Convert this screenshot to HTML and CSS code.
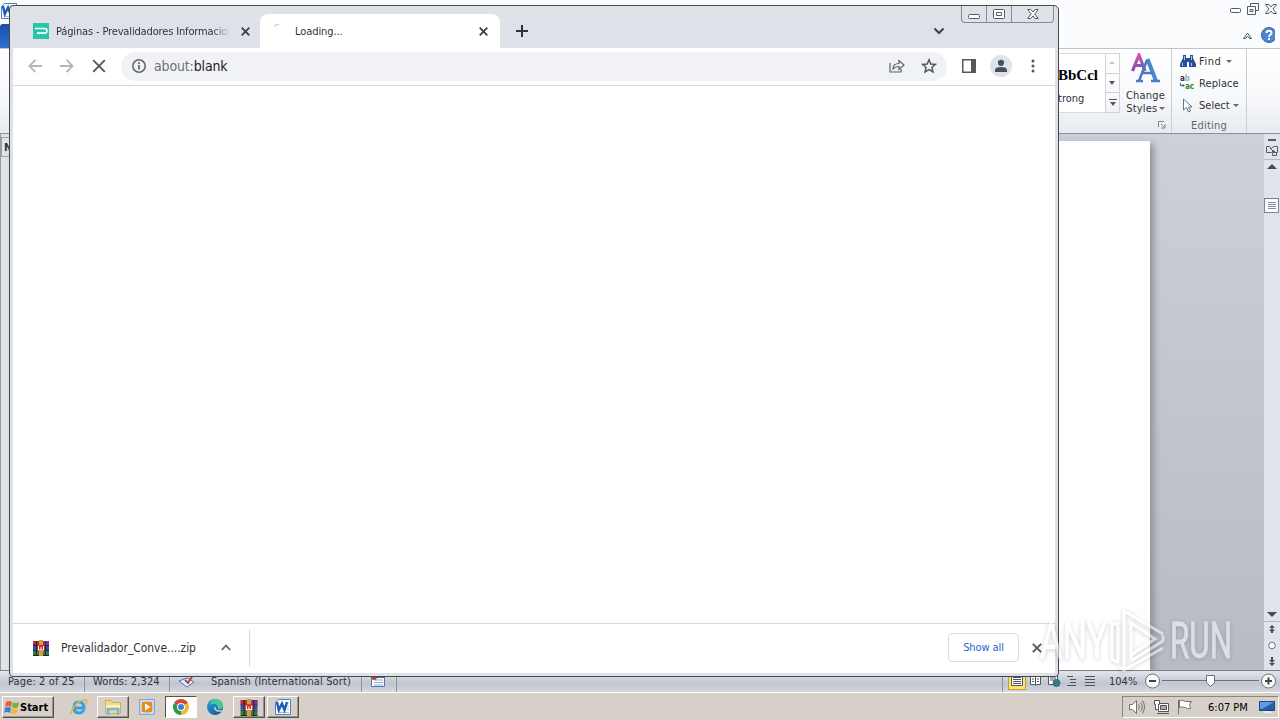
FILE: index.html
```html
<!DOCTYPE html>
<html lang="en">
  <head>
    <meta charset="utf-8">
    <title>Desktop</title>
    <link rel="stylesheet" href="styles.css">
  </head>
<body>
  <svg class="defs" width="0" height="0">
    <defs>
      <linearGradient id="pink" x2="0" y2="1"><stop stop-color="#d252b5"/><stop offset="1" stop-color="#7a4fae"/></linearGradient>
      <linearGradient id="edge" x2="1" y2="1"><stop stop-color="#2fa3dc"/><stop offset="1" stop-color="#0b4f9e"/></linearGradient>
      <symbol id="rar" viewBox="0 0 16 16">
        <path fill="#b32b3c" d="M0 1h16v4H0z"/><path fill="#7c3a94" d="M10 1h6v4h-6z"/><path fill="#3150ac" d="M0 6h16v4H0z"/><path fill="#238542" d="M0 11h16v4H0z"/>
        <path fill="#28212c" d="M0 5h16v1H0zM0 10h16v1H0zM0 15h16v1H0zM3 1h1v14H3zM12 1h1v14h-1z"/>
        <path fill="#d79c32" d="M6 0h4v16H6z"/><path fill="#c82b2b" d="M4 5h8v6H4z"/>
        <path fill="none" stroke="#fff" d="M5.500 6v4h5V6M8 7v3"/>
      </symbol>
      <symbol id="word" viewBox="0 0 18 18">
        <path fill="#fff" stroke="#4b82bd" d="M4.500 1.500h12v15h-15v-12z"/>
        <path fill="none" stroke="#9ab8df" d="M13 5h2M13 8h2M13 11h2M5 14.500h10"/>
        <path fill="none" stroke="#1d5fb5" stroke-width="2.500" d="M3 4l1.800 8L8 5.500l2.500 6.500L13 4"/>
      </symbol>
    </defs>
  </svg>

  <div class="desktop">
    <section class="word">
      <header class="word-title">
        <svg class="word-logo" width="62" height="18"><use href="#word" width="18" height="18"/><path fill="#3c62b0" d="M31 3h12v1H31zM58 3h4v1h-4z"/></svg>
        <svg class="word-buttons" width="48" height="14" fill="none" stroke="#555b66">
          <rect x=".5" y="6.500" width="10" height="4" rx="1"/>
          <path d="M20.500 4.500v-3h8v7h-3M17.500 4.500h8v8h-8zM20 7.500h3v2h-3z"/>
          <path d="M35.500 2.500h3.500l2 2.500 2-2.500h3.500L43 7l3.500 4.500H43L41 9l-2 2.500h-3.500L39 7z"/>
        </svg>
      </header>
      <div class="word-tabs">
        <span class="file-tab"></span>
        <svg width="38" height="18">
          <path fill="none" stroke="#4e5561" d="M6.500 12.500L10.500 7l4 5.500h-2l-2-2.500-2 2.500z"/>
          <circle cx="32" cy="9" r="7.500" fill="#4e86d4" stroke="#3165ad"/>
          <path fill="none" stroke="#fff" stroke-width="2" d="M29.500 7c0-3 5-3 5 0 0 2-2.500 1.500-2.500 4M32 12v2"/>
        </svg>
      </div>
      <div class="ribbon">
        <div class="styles-group">
          <div class="style-item"><b>BbCcl</b><span>trong</span></div>
          <div class="gallery-scroll">
            <span><svg width="7" height="4"><path fill="#c5c8ce" d="M3 0l3 3H0z"/></svg></span>
            <span><svg width="7" height="4"><path fill="#555" d="M0 0h6L3 4z"/></svg></span>
            <span><svg width="8" height="7"><path fill="#555" d="M0 0h8v1H0zM1 3h6L4 7z"/></svg></span>
          </div>
          <div class="change-styles">
            <svg width="31" height="30">
              <path fill="none" stroke="url(#pink)" stroke-width="3.200" d="M2.500 18L9 2l6 16M5 12.500h8"/>
              <path fill="none" stroke="#4786d2" stroke-width="4" d="M17.500 6l8.500 22"/>
              <path fill="none" stroke="#4a7cc2" stroke-width="2.500" d="M17 7L9 28M11 20h12M6 28h7M21 28h9"/>
            </svg>
            <span>Change</span>
            <span>Styles <i class="arrow"></i></span>
          </div>
          <svg class="launcher" width="8" height="8"><path fill="none" stroke="#7d838e" d="M.5 6V.5H6M3 3l3 3M7 3v4H3"/></svg>
        </div>
        <div class="editing-group">
          <div class="command">
            <svg width="16" height="14"><path fill="#284f9c" d="M3 1h3v3h4V1h3v3l3 6v3H9V8H7v5H0v-3l3-6z"/><path fill="#a9c5f0" d="M4 2h1v4H4zM11 2h1v4h-1zM2 9h1v3H2zM11 9h1v3h-1z"/></svg>
            <span class="find">Find</span><i class="arrow"></i>
          </div>
          <div class="command">
            <div class="replace-icon"><span>a<em>b</em></span><span><svg width="5" height="5"><path fill="none" stroke="#246bb4" d="M.5 0v2.500H4M2.500 1L4 2.500 2.500 4"/></svg><u>ac</u></span></div>
            <span class="replace">Replace</span>
          </div>
          <div class="command">
            <svg width="16" height="15"><path fill="#fff" stroke="#5d7594" d="M3.500 1v11l3-2.500 2 4.500 2-1-2-4h3.500z"/></svg>
            <span class="select">Select</span><i class="arrow"></i>
          </div>
          <div class="group-name">Editing</div>
        </div>
      </div>
      <div class="document">
        <div class="nav-pane"><b>N</b></div>
        <div class="page"></div>
        <div class="canvas"></div>
        <div class="scrollbar">
          <svg width="16" height="80" fill="none" stroke="#555c69">
            <path stroke-width="2" d="M4 6h8"/>
            <path d="M2.500 12.500h3l2 2 2-2h4v6h-2l-2-2-2 2h-5zM8.500 18.500h4v3h-4zM6 14l5 5"/>
            <path stroke="#b5bac4" d="M0 25.500h16"/>
            <path fill="#444b58" stroke="none" d="M8 30l5 5H3z"/>
            <rect x=".5" y="64.500" width="14" height="14" fill="#fafbfd" stroke="#7d8490"/>
            <path stroke="#868d99" d="M4 68.500h8M4 70.500h8M4 72.500h8M4 74.500h8"/>
          </svg>
          <svg width="16" height="61" fill="#444b58">
            <path d="M3 3h10L8 8z"/>
            <path stroke="#b5bac4" d="M0 12.500h16"/>
            <path d="M8 16l3 3H5zM8 19l3 3H5zM7 21h2v3H7zM8 57l3-3H5zM8 54l3-3H5zM7 48h2v3H7z"/>
            <circle cx="8" cy="36.500" r="3.300" fill="#fff" stroke="#6b727e"/>
          </svg>
        </div>
      </div>
      <footer class="status">
        <span class="status-page">Page: 2 of 25</span>
        <span class="status-words">Words: 2,324</span>
        <span class="status-proof"><svg width="18" height="14"><path fill="#e6efff" stroke="#4474bd" d="M1 7l8-3 7 4-7 5z"/><path fill="none" stroke="#c33e32" stroke-width="2" d="M7 6l3 3 5-8"/></svg></span>
        <span class="status-lang">Spanish (International Sort)</span>
        <span class="status-macro"><svg width="16" height="14"><path fill="#fff" stroke="#4f78b5" d="M1.500 2.500h13v10h-13z"/><path stroke="#8fa9d0" d="M4 6h9M4 8.500h9M4 11h9"/><path fill="#3d69b2" d="M6 2h9v2H6z"/><circle cx="4" cy="3" r="3" fill="#b94035"/></svg></span>
        <div class="views">
          <svg width="96" height="20" fill="none" stroke="#4c5563">
            <rect x="1.500" y=".5" width="17" height="18" fill="#ffe17a" stroke="#c99c2c"/>
            <path fill="#fff" d="M4.500 3.500h11v11h-11z"/><path d="M6 6.500h8M6 8.500h8M6 10.500h8M6 12.500h8"/>
            <path fill="#fff" d="M23.500 5.500h4l1 1 1-1h4v8h-4l-1 1-1-1h-4zM28.500 6v8M25 8h2M25 10.500h2M30 8h2M30 10.500h2"/>
            <path fill="#fff" d="M41.500 4.500h9v9h-9zM43 7h6M43 9h6"/><circle cx="49.500" cy="12" r="3.500" fill="#308470" stroke="#27669f"/>
            <path d="M60 5.500h6M63 8.500h6M63 11.500h6M60 14.500h9M78 5.500h10M78 8.500h10M78 11.500h10M78 14.500h10"/>
          </svg>
          <span class="zoom-level">104%</span>
          <svg width="135" height="20" fill="none" stroke="#69717e">
            <path d="M17 9.500h97"/><circle cx="7.500" cy="10" r="7" fill="#fafafa"/><circle cx="123.500" cy="10" r="7" fill="#fafafa"/>
            <path stroke="#444" stroke-width="2" d="M4 10h7M120 10h7M123.500 6.500v7"/>
            <path fill="#fff" d="M61.500 4.500h8v7l-4 4-4-4z"/>
          </svg>
        </div>
      </footer>
    </section>

    <section class="chrome">
      <div class="tab-strip">
        <div class="tab">
          <svg width="16" height="16"><path fill="#27c6a4" d="M0 0h16v16H0z"/><path fill="none" stroke="#fff" stroke-width="1.600" d="M2 5.500h9.500q2.500 0 2.500 2.300t-2.500 2.300H4"/></svg>
          <span class="tab-title tab-title-fade">Páginas - Prevalidadores Informacion</span>
          <svg class="tab-close" width="9" height="9"><path stroke="#3c4043" stroke-width="1.800" d="M.7.7l7.600 7.600M8.300.7L.7 8.300"/></svg>
        </div>
        <div class="tab tab-active">
          <svg width="16" height="16"><path fill="none" stroke="#c8cdf4" stroke-width="1.600" d="M2 3q2-1.500 5-1.500"/></svg>
          <span class="tab-title">Loading...</span>
          <svg class="tab-close" width="9" height="9"><path stroke="#3c4043" stroke-width="1.800" d="M.7.7l7.600 7.600M8.300.7L.7 8.300"/></svg>
        </div>
        <svg class="new-tab" width="12" height="12"><path stroke="#303339" stroke-width="2" d="M6 0v12M0 6h12"/></svg>
        <svg class="tab-search" width="12" height="8"><path fill="none" stroke="#3c4043" stroke-width="2" d="M1.500 1.500L6 6l4.500-4.500"/></svg>
        <div class="window-buttons">
          <span><svg width="12" height="14"><rect x=".5" y="7.500" width="11" height="4" rx="1" fill="#fff" stroke="#555b66"/></svg></span>
          <span><svg width="12" height="14" fill="#fff" stroke="#555b66"><rect x=".5" y="2.500" width="11" height="9" rx="1"/><path d="M3.500 5.500h5v3h-5z"/></svg></span>
          <span><svg width="12" height="14"><path fill="#fff" stroke="#555b66" d="M.8 2.500h3L6 5l2.200-2.500h3L7.800 7l3.400 4.500h-3L6 9l-2.200 2.500h-3L4.200 7z"/></svg></span>
        </div>
      </div>
      <div class="toolbar">
        <svg width="14" height="14" fill="none" stroke="#b4b6b9" stroke-width="1.800"><path d="M14 7H1M7.500.8L1.300 7l6.200 6.200"/></svg>
        <svg width="14" height="14" fill="none" stroke="#b4b6b9" stroke-width="1.800"><path d="M0 7h13M6.500.8L12.700 7l-6.200 6.200"/></svg>
        <svg width="14" height="14" stroke="#54585c" stroke-width="1.900"><path d="M1.200 1.200l11.600 11.600M12.800 1.200L1.200 12.800"/></svg>
        <div class="omnibox">
          <svg width="14" height="14"><circle cx="7" cy="7" r="6.200" fill="none" stroke="#5f6368" stroke-width="1.500"/><path stroke="#5f6368" stroke-width="1.700" d="M7 6v4.500M7 3.300V5"/></svg>
          <span class="url">about:<b>blank</b></span>
          <svg class="share" width="16" height="14" fill="none" stroke="#5f6368" stroke-width="1.200"><path d="M1 4v9h11v-3M4 10q0-5.500 6-5.500V1.500L15 6l-5 4.500v-3Q6 7.500 4 10z"/></svg>
          <svg width="16" height="16"><path fill="none" stroke="#54585c" stroke-width="1.500" d="M8 1.800l1.800 4.200 4.600.4-3.500 3 1.100 4.500-4-2.400-4 2.400 1.100-4.500-3.500-3 4.600-.4z"/></svg>
        </div>
        <svg class="panel" width="14" height="14"><path fill="#54585c" fill-rule="evenodd" d="M0 0h14v14H0zM1.500 1.500v11H9v-11z"/></svg>
        <svg class="profile" width="22" height="22"><circle cx="11" cy="11" r="11" fill="#dfe2e8"/><circle cx="11" cy="7.800" r="3.100" fill="#47505e"/><path fill="#47505e" d="M5 17v-2q0-3 6-3t6 3v2z"/></svg>
        <svg class="menu" width="4" height="14" fill="#505458"><circle cx="2" cy="2" r="1.500"/><circle cx="2" cy="7" r="1.500"/><circle cx="2" cy="12" r="1.500"/></svg>
      </div>
      <div class="blank-page"></div>
      <div class="downloads">
        <div class="download">
          <svg width="16" height="16"><use href="#rar"/></svg>
          <span class="file-name">Prevalidador_Conve....zip</span>
          <svg width="10" height="7"><path fill="none" stroke="#5f6368" stroke-width="1.800" d="M.8 6L5 1.500 9.200 6"/></svg>
        </div>
        <button class="show-all">Show all</button>
        <svg width="10" height="10"><path stroke="#54585c" stroke-width="1.900" d="M.8.8l8.400 8.400M9.200.8L.8 9.200"/></svg>
      </div>
    </section>

    <footer class="taskbar">
      <div class="start">
        <svg width="17" height="16"><path fill="#e3603c" d="M3 3q3-2 6 0L8 8Q5 6 2 8z"/><path fill="#70b544" d="M10 3q3 2 6 0l-1 5q-3 2-6 0z"/><path fill="#3b82cc" d="M2 9q3-2 6 0l-1 5q-3-2-6 0z"/><path fill="#f2b92f" d="M9 9q3 2 6 0l-1 5q-3 2-6 0z"/></svg>
        <b>Start</b>
      </div>
      <div class="task">
        <svg width="18" height="18"><path fill="none" stroke="#3a9fe0" stroke-width="3" d="M14 12q-2 3-5 3-5 0-5-5.500T9 4q5 0 5 6H5"/><path fill="none" stroke="#e5b536" stroke-width="1.500" d="M2 15Q-1 17 4 9t12-7q2 0 0 4"/></svg>
      </div>
      <div class="task task-open">
        <svg width="18" height="18"><path fill="#f1d98c" stroke="#cfae5c" d="M1.500 2.500h6l1 2h8v11h-15z"/><path fill="#fff2b1" d="M2 7h14v3H2z"/><path fill="none" stroke="#75b6df" stroke-width="2.500" d="M4 17v-6h10v6"/></svg>
      </div>
      <div class="task">
        <svg width="18" height="18"><path fill="#c3dcf3" stroke="#7ba9d3" d="M1.500 1.500h15v15h-15z"/><path fill="#f08a16" d="M4 4h10v10H4z"/><circle cx="9" cy="9" r="5.500" fill="#f08a16"/><path fill="#fff" d="M7 5.500L12.500 9 7 12.500z"/></svg>
      </div>
      <div class="task task-pressed">
        <svg width="18" height="18"><path fill="#df4334" d="M9 9L2.070 5A8 8 0 0 1 15.930 5z"/><path fill="#efbd27" d="M9 9l6.930-4A8 8 0 0 1 9 17z"/><path fill="#299b4d" d="M9 9v8A8 8 0 0 1 2.070 5z"/><circle cx="9" cy="9" r="4" fill="#fff"/><circle cx="9" cy="9" r="3" fill="#397de4"/></svg>
      </div>
      <div class="task">
        <svg width="18" height="18"><circle cx="9" cy="9" r="8" fill="url(#edge)"/><path fill="#48c99a" d="M9 1q8 0 8 7-1 4-5 3 0-5-4-5-2 0-4 1 1-6 5-6z"/><path fill="#d6d0c8" d="M9.500 8.500q0 5 7 3.500l-1 1.500Q9 15 8 9.500z"/></svg>
      </div>
      <div class="task task-open"><svg width="18" height="17"><use href="#rar" width="18" height="17"/></svg></div>
      <div class="task task-open task-last"><svg width="18" height="18"><use href="#word"/></svg></div>
      <div class="tray">
        <svg width="66" height="18" fill="#fff" stroke="#71716f">
          <path d="M1.500 6.500h3l4-4v13l-4-4h-3z"/><path fill="none" d="M10.500 6.500q2 2.500 0 5M12.500 4.500q3.500 4.500 0 9M14.500 2.500q4 6.500 0 13"/>
          <path stroke="#555" d="M30.500 5.500h10v8h-10zM29 15.500h12"/><path fill="#aaa" stroke="#555" d="M32.500 7.500h6v4h-6z"/><path stroke="#555" d="M26.500 2.500h5v4h-1v5h-3v-5h-1z"/>
          <path d="M50.500 2v14M51.500 2.500q3-1 6 1h6l-2 3 1 4q-3 1-5-1-3-1-6 0z"/>
        </svg>
        <span class="clock">6:07 PM</span>
        <svg width="16" height="16"><path fill="#245dad" stroke="#24467c" d="M.5 2.500h15v9H.5z"/><path fill="#5c9ce4" d="M1 3h14L3 10H1z"/><path fill="#e9edf2" d="M4 12h7l2 2H5z"/></svg>
      </div>
    </footer>

    <svg class="watermark" width="204" height="70">
      <text x="2" y="51" textLength="67" lengthAdjust="spacingAndGlyphs">ANY</text>
      <path d="M80 17h-6v35l6 4M80 14v42M125 27L86 4v58M93 52V16l24 16-24 16M125 28v6L93 54M125 41L86 63l-5-3"/>
      <text x="132" y="51" textLength="62" lengthAdjust="spacingAndGlyphs">RUN</text>
    </svg>
  </div>
</body>
</html>
```
FILE: styles.css
```css
* {
  box-sizing: border-box;
}

body {
  margin: 0;
  font-family: "DejaVu Sans Condensed", "DejaVu Sans", sans-serif;
  font-size: 11px;
  color: #303338;
}

svg {
  display: block;
  flex-shrink: 0;
}

span {
  white-space: nowrap;
}

.defs {
  position: absolute;
}

.desktop {
  position: relative;
  display: flex;
  flex-direction: column;
  width: 1280px;
  height: 720px;
  overflow: hidden;
}

/* word window */

.word {
  display: flex;
  flex-direction: column;
  height: 692px;
  background: #fbfcfd;
}

.word-title,
.word-tabs {
  display: flex;
  justify-content: space-between;
  height: 24px;
  padding-top: 2px;
}

.word-buttons {
  margin-right: 2px;
}

.word-tabs {
  padding: 0 5px 0 0;
  align-items: center;
}

.word-tabs svg {
  margin-top: -2px;
}

.file-tab {
  width: 40px;
  height: 24px;
  background: linear-gradient(#1c4da5, #2f70d4);
  border-radius: 3px 0 0 0;
}

.ribbon {
  display: flex;
  justify-content: flex-end;
  height: 86px;
  padding-right: 33px;
  border-top: 1px solid #bfc3ca;
  border-bottom: 1px solid #8b9099;
  background: linear-gradient(#fff, #f8f9fb 55%, #e7eaef);
}

.styles-group {
  position: relative;
  display: flex;
  padding-top: 4px;
  border-right: 1px solid #c9cdd4;
}

.style-item {
  display: flex;
  flex-direction: column;
  width: 48px;
  height: 60px;
  border: 1px solid #d5d8dd;
  border-right: 0;
  background: #fff;
}

.style-item b {
  height: 37px;
  margin-top: 12px;
  color: #000;
  font: bold 15px/18px "Liberation Serif", serif;
}

.style-item span {
  margin-top: -11px;
}

.gallery-scroll {
  display: flex;
  flex-direction: column;
  width: 15px;
  height: 60px;
  border: 1px solid #cfd3d9;
}

.gallery-scroll span {
  display: flex;
  flex: 1;
  align-items: center;
  justify-content: center;
  border-bottom: 1px solid #cfd3d9;
}

.gallery-scroll span:last-child {
  border: 0;
}

.change-styles {
  display: flex;
  flex-direction: column;
  align-items: center;
  width: 51px;
  line-height: 13px;
  letter-spacing: .2px;
}

.change-styles svg {
  margin-bottom: 6px;
}

.arrow {
  display: inline-block;
  border: 3px solid transparent;
  border-top-color: #666b73;
  border-bottom: 0;
  vertical-align: 2px;
}

.change-styles .arrow {
  margin-left: -2px;
}

.launcher {
  position: absolute;
  right: 5px;
  bottom: 4px;
}

.editing-group {
  width: 75px;
  padding: 1px 0 0 8px;
  border-right: 1px solid #c9cdd4;
}

.command {
  display: flex;
  align-items: center;
  height: 22px;
  gap: 3px;
}

.find {
  width: 24px;
  letter-spacing: .5px;
}

.replace {
  letter-spacing: .1px;
}

.select {
  width: 31px;
}

.replace-icon {
  display: flex;
  flex-direction: column;
  width: 16px;
  font: bold 8px/8px "DejaVu Sans Condensed", sans-serif;
}

.replace-icon span {
  display: flex;
}

.replace-icon em {
  color: #a7a9ac;
  font-style: normal;
}

.replace-icon u {
  color: #288437;
  text-decoration: none;
}

.group-name {
  padding-right: 8px;
  line-height: 20px;
  letter-spacing: .2px;
  text-align: center;
  color: #62676f;
}

.document {
  display: flex;
  flex: 1;
  background: linear-gradient(#cdd0d8, #b7bbc4);
}

.nav-pane {
  width: 10px;
  padding-top: 3px;
  overflow: hidden;
  background: #e1e4ea;
  border-left: 1px solid #969ba4;
}

.nav-pane b {
  display: block;
  height: 20px;
  padding-left: 2px;
  border: 1px solid #9ca1ab;
  line-height: 19px;
}

.page {
  width: 1140px;
  margin-top: 7px;
  background: #fff;
  box-shadow: 4px 3px 7px #8f939c;
}

.canvas {
  flex: 1;
}

.scrollbar {
  display: flex;
  flex-direction: column;
  justify-content: space-between;
  width: 16px;
  background: #dfe3eb;
}

.status {
  display: flex;
  height: 22px;
  border-top: 1px solid #787d86;
  background: linear-gradient(#e3e6eb, #c0c5ce 60%, #d5d8df);
  line-height: 21px;
  letter-spacing: .12px;
}

.status > span {
  border-right: 1px solid #8e949f;
}

.status-page {
  width: 85px;
  padding-left: 8px;
}

.status-words {
  width: 85px;
  padding-left: 8px;
}

.status-proof {
  width: 32px;
  padding: 3px 0 0 8px;
}

.status > .status-proof {
  border: 0;
}

.status-lang {
  width: 160px;
  padding-left: 9px;
}

.status-macro {
  width: 35px;
  padding: 3px 0 0 8px;
}

.views {
  display: flex;
  align-items: flex-start;
  margin-left: auto;
  padding-left: 4px;
  border-left: 1px solid #8e949f;
}

.zoom-level {
  width: 42px;
  padding-left: 6px;
  letter-spacing: 0;
}

/* chrome window */

.chrome {
  position: absolute;
  left: 9px;
  top: 5px;
  display: flex;
  flex-direction: column;
  width: 1050px;
  height: 672px;
  padding: 0 3px 3px;
  border: 1px solid #45494f;
  border-radius: 4px 5px 4px 4px;
  background: #dee1e8;
}

.tab-strip {
  display: flex;
  height: 42px;
  padding: 8px 0 0 8px;
}

.tab {
  display: flex;
  align-items: center;
  width: 239px;
  height: 34px;
  padding: 0 10px 0 12px;
}

.tab-active {
  width: 240px;
  padding-right: 12px;
  background: #fff;
  border-radius: 8px 8px 0 0;
}

.tab-title {
  width: 174px;
  margin-left: 7px;
  overflow: hidden;
  letter-spacing: -.08px;
}

.tab-title-fade {
  letter-spacing: -.15px;
  -webkit-mask-image: linear-gradient(90deg, #000 156px, transparent);
  mask-image: linear-gradient(90deg, #000 156px, transparent);
}

.tab-close {
  margin-left: auto;
}

.new-tab {
  margin: 11px 0 0 16px;
}

.tab-search {
  margin: 13px 0 0 405px;
}

.window-buttons {
  display: flex;
  width: 93px;
  height: 17px;
  margin: -8px 1px 0 auto;
  border: 1px solid #858b96;
  border-top: 0;
  border-radius: 0 0 4px 4px;
}

.window-buttons span {
  display: flex;
  flex: 1;
  align-items: center;
  justify-content: center;
  border-right: 1px solid #858b96;
}

.window-buttons span:last-child {
  flex: 0 0 41px;
  border: 0;
}

.toolbar {
  display: flex;
  align-items: center;
  gap: 18px;
  height: 38px;
  padding: 0 0 1px 15px;
  border-bottom: 1px solid #d6d8dc;
  background: #fff;
}

.omnibox {
  display: flex;
  align-items: center;
  width: 826px;
  height: 29px;
  margin-left: -3px;
  padding: 0 10px 0 11px;
  border-radius: 15px;
  background: #f0f2f5;
}

.url {
  margin-left: 8px;
  font-size: 14px;
  letter-spacing: -.15px;
  color: #6c7075;
}

.url b {
  font-weight: normal;
  color: #202124;
}

.share {
  margin: 0 16px 0 auto;
}

.panel {
  margin-left: -3px;
}

.profile {
  margin-left: -4px;
}

.menu {
  margin-left: 1px;
}

.blank-page {
  flex: 1;
  background: #fff;
}

.downloads {
  display: flex;
  align-items: center;
  height: 50px;
  padding: 0 13px 2px 0;
  border-top: 1px solid #d6d8dc;
  background: #fff;
}

.download {
  display: flex;
  align-items: center;
  width: 237px;
  height: 38px;
  padding-left: 20px;
  border-right: 1px solid #d6d8dc;
}

.file-name {
  width: 148px;
  margin: 0 12px;
  font-size: 12px;
  letter-spacing: -.05px;
}

.show-all {
  width: 71px;
  height: 29px;
  margin: 0 13px 0 auto;
  padding: 0;
  border: 1px solid #d9dce0;
  border-radius: 4px;
  background: #fff;
  color: #1a66c9;
  font: inherit;
  letter-spacing: -.1px;
}

/* taskbar */

.taskbar {
  display: flex;
  align-items: center;
  height: 28px;
  padding: 1px 1px 0 2px;
  border-top: 1px solid #fff;
  background: #d6d0c8;
}

.start,
.task-open {
  border: 1px solid;
  border-color: #fff #55524e #55524e #fff;
  box-shadow: inset -1px -1px #96928c;
}

.start {
  display: flex;
  align-items: center;
  width: 52px;
  height: 22px;
  margin-right: 8px;
  color: #000;
}

.task {
  display: flex;
  align-items: center;
  justify-content: center;
  width: 32px;
  height: 22px;
  margin: 0 1px;
}

.task-pressed {
  border: 1px solid;
  border-color: #55524e #fff #fff #55524e;
  background: #fff;
}

.tray {
  display: flex;
  align-items: center;
  width: 157px;
  height: 22px;
  margin-left: auto;
  padding-left: 5px;
  border: 1px solid;
  border-color: #8a8680 #fff #fff #8a8680;
}

.clock {
  width: 51px;
  margin-left: 15px;
  color: #000;
}

.tray svg:first-child {
  margin-right: -1px;
}

.watermark {
  position: absolute;
  left: 1038px;
  top: 607px;
  filter: drop-shadow(0 1px 2px rgba(0, 0, 0, .35));
  opacity: .52;
}

.watermark text {
  fill: #fff;
  stroke: #fff;
  stroke-width: .8px;
  font-family: Roboto, sans-serif;
  font-size: 50px;
}

.watermark path {
  fill: none;
  stroke: #fff;
  stroke-width: 3;
}
```
